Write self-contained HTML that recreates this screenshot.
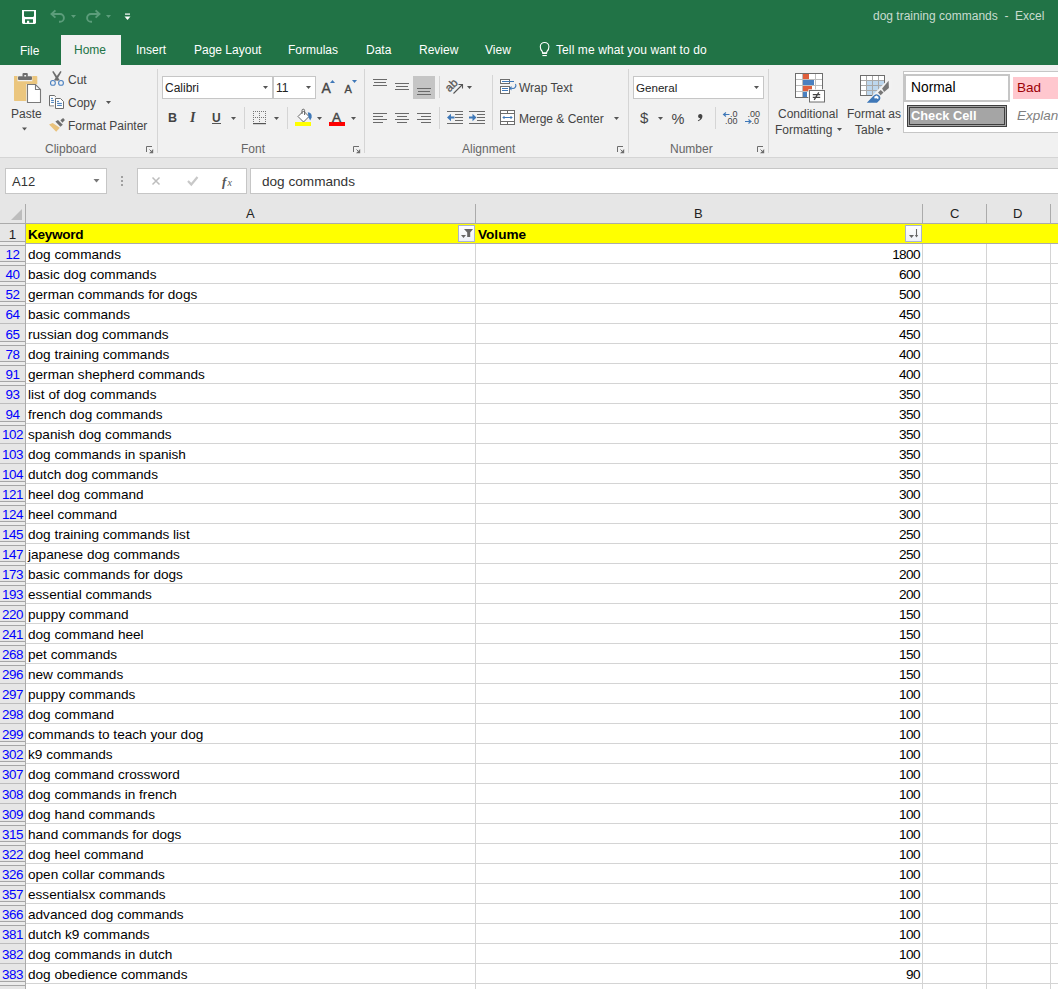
<!DOCTYPE html>
<html><head><meta charset="utf-8"><style>
*{margin:0;padding:0;box-sizing:border-box}
html,body{width:1058px;height:989px;overflow:hidden;background:#fff;font-family:"Liberation Sans",sans-serif;position:relative}
.abs{position:absolute}
#title{position:absolute;left:0;top:0;width:1058px;height:65px;background:#217346}
#ribbon{position:absolute;left:0;top:65px;width:1058px;height:93px;background:#f1f1f1;border-bottom:1px solid #d5d5d5}
#fbar{position:absolute;left:0;top:158px;width:1058px;height:66px;background:#e6e6e6}
.tab{position:absolute;top:44px;font-size:12px;line-height:12px;color:#fff;white-space:nowrap}
.rt{position:absolute;font-size:12px;line-height:12px;color:#444;white-space:nowrap}
.glabel{position:absolute;top:143px;font-size:12px;line-height:12px;color:#666;white-space:nowrap}
.gsep{position:absolute;top:69px;width:1px;height:83px;background:#d9d9d9}
.sep{position:absolute;width:1px;background:#d0d0d0}
.box{position:absolute;background:#fff;border:1px solid #c6c6c6}
/* grid */
#grid{position:absolute;left:0;top:0}
.rh{position:absolute;left:0;width:25px;height:19px;font-size:13.4px;color:#0000ff;text-align:center;line-height:20px;letter-spacing:-0.5px;padding-top:1px}
.ca{position:absolute;left:28px;height:19px;padding-top:1px;font-size:13.6px;color:#000;line-height:20px;white-space:nowrap}
.cb{position:absolute;left:800px;width:120px;height:19px;padding-top:1px;font-size:13.6px;color:#000;line-height:20px;text-align:right;letter-spacing:-0.6px}
.hl{position:absolute;left:26px;width:1032px;height:1px;background:#d4d4d4}
.dbl{position:absolute;left:0;width:25px;height:5px;border-top:1px solid #a6a6a6;border-bottom:1px solid #a6a6a6;background:#ececec}
.sgl{position:absolute;left:0;width:25px;height:1px;background:#bdbdbd}

</style></head><body>
<div id="title"></div>
<div class="abs" style="left:61px;top:35px;width:60px;height:30px;background:#f1f1f1"></div>
<div class="tab" style="left:20px;top:45px">File</div>
<div class="tab" style="left:74px;color:#217346">Home</div>
<div class="tab" style="left:136px">Insert</div>
<div class="tab" style="left:194px">Page Layout</div>
<div class="tab" style="left:288px">Formulas</div>
<div class="tab" style="left:366px">Data</div>
<div class="tab" style="left:419px">Review</div>
<div class="tab" style="left:485px">View</div>
<div class="tab" style="left:556px;letter-spacing:0.1px">Tell me what you want to do</div>
<div class="abs" style="left:873px;top:10px;font-size:12px;line-height:12px;color:#c8dccf;white-space:pre">dog training commands  -  Excel</div>
<div id="ribbon"></div>
<div id="fbar"></div>
<div class="abs" style="left:0;top:224px;width:25px;height:765px;background:#e6e6e6"></div>

<!-- ribbon texts -->
<div class="rt" style="left:11px;top:108px">Paste</div>
<div class="rt" style="left:68px;top:74px">Cut</div>
<div class="rt" style="left:68px;top:97px">Copy</div>
<div class="rt" style="left:68px;top:120px">Format Painter</div>
<div class="glabel" style="left:45px">Clipboard</div>
<div class="glabel" style="left:241px">Font</div>
<div class="glabel" style="left:462px">Alignment</div>
<div class="glabel" style="left:670px">Number</div>
<div class="box" style="left:162px;top:76px;width:111px;height:23px"></div>
<div class="box" style="left:273px;top:76px;width:43px;height:23px"></div>
<div class="rt" style="left:165px;top:82px;color:#222">Calibri</div>
<div class="rt" style="left:276px;top:82px;color:#222">11</div>
<div class="rt" style="left:519px;top:82px">Wrap Text</div>
<div class="rt" style="left:519px;top:113px">Merge &amp; Center</div>
<div class="box" style="left:633px;top:76px;width:131px;height:23px"></div>
<div class="rt" style="left:636px;top:82px;color:#222;font-size:11.6px">General</div>
<div class="rt" style="left:778px;top:108px">Conditional</div>
<div class="rt" style="left:775px;top:124px">Formatting</div>
<div class="rt" style="left:847px;top:108px">Format as</div>
<div class="rt" style="left:855px;top:124px">Table</div>
<!-- styles gallery -->
<div class="abs" style="left:903px;top:71px;width:160px;height:62px;background:#fff;border:1px solid #c6c6c6"></div>
<div class="abs" style="left:904px;top:74px;width:106px;height:28px;border:2px solid #c6c6c6;background:#fff"></div>
<div class="abs" style="left:1013px;top:77px;width:50px;height:22px;background:#ffc7ce"></div>
<div class="abs" style="left:907px;top:105px;width:100px;height:22px;background:#a5a5a5;border:1px solid #3f3f3f;box-shadow:inset 0 0 0 1px #a5a5a5,inset 0 0 0 2px #3f3f3f"></div>
<div class="rt" style="left:911px;top:82px;color:#000;font-size:13.8px">Normal</div>
<div class="rt" style="left:1017px;top:82px;color:#9c0006;font-size:13.5px">Bad</div>
<div class="rt" style="left:911px;top:110px;color:#fff;font-size:12.8px;font-weight:bold">Check Cell</div>
<div class="rt" style="left:1017px;top:110px;color:#7f7f7f;font-size:13.5px;font-style:italic">Explan</div>

<!-- formula bar -->
<div class="box" style="left:5px;top:168px;width:102px;height:26px"></div>
<div class="box" style="left:137px;top:168px;width:110px;height:26px"></div>
<div class="box" style="left:250px;top:168px;width:820px;height:26px"></div>
<div class="abs" style="left:12px;top:174px;font-size:13px;color:#333">A12</div>
<div class="abs" style="left:262px;top:174px;font-size:13.6px;color:#333">dog commands</div>
<!-- col headers -->
<div class="abs" style="left:0;top:223px;width:1058px;height:1px;background:#ababab"></div>
<div class="abs" style="left:25px;top:204px;width:1px;height:785px;background:#ababab"></div>
<div class="abs" style="left:475px;top:204px;width:1px;height:20px;background:#ababab"></div>
<div class="abs" style="left:922px;top:204px;width:1px;height:20px;background:#ababab"></div>
<div class="abs" style="left:986px;top:204px;width:1px;height:20px;background:#ababab"></div>
<div class="abs" style="left:1050px;top:204px;width:1px;height:20px;background:#ababab"></div>
<div class="abs" style="left:475px;top:224px;width:1px;height:765px;background:#d4d4d4"></div>
<div class="abs" style="left:922px;top:224px;width:1px;height:765px;background:#d4d4d4"></div>
<div class="abs" style="left:986px;top:224px;width:1px;height:765px;background:#d4d4d4"></div>
<div class="abs" style="left:1050px;top:224px;width:1px;height:765px;background:#d4d4d4"></div>
<div class="abs" style="left:246px;top:206px;font-size:13px;color:#222">A</div>
<div class="abs" style="left:694px;top:206px;font-size:13px;color:#222">B</div>
<div class="abs" style="left:950px;top:206px;font-size:13px;color:#222">C</div>
<div class="abs" style="left:1013px;top:206px;font-size:13px;color:#222">D</div>
<!-- row 1 -->
<div class="abs" style="left:26px;top:224px;width:1032px;height:19px;background:#ffff00"></div>
<div class="abs" style="left:0;top:243px;width:1058px;height:1px;background:#ababab"></div>
<div class="abs" style="left:0;top:224px;width:25px;text-align:center;font-size:13.4px;line-height:20px;padding-top:1px;color:#222">1</div>
<div class="abs" style="left:28px;top:224px;font-size:13.6px;line-height:20px;padding-top:1px;font-weight:bold;color:#000;letter-spacing:-0.3px">Keyword</div>
<div class="abs" style="left:478px;top:224px;font-size:13.6px;line-height:20px;padding-top:1px;font-weight:bold;color:#000">Volume</div>
<svg class="abs" style="left:0;top:0" width="1058" height="250" viewBox="0 0 1058 250" shape-rendering="geometricPrecision">
<!-- QAT: save -->
<path d="M22 10 H36 V23 L35 24 H23 L22 23 Z" fill="#fff"/>
<path d="M24 11.2 H34 V16 L33.2 17 H24.8 L24 16 Z" fill="#217346"/>
<path d="M25 19.2 H33 V22.8 H29.2 V20.8 H27 V22.8 H25 Z" fill="#217346"/>
<!-- undo -->
<path d="M55.4 10.4 L51.5 14 L55.4 17.6 M52 14 H60 A3.8 3.8 0 0 1 60 21.8 H59" fill="none" stroke="#5c9d7b" stroke-width="1.9"/>
<path d="M71 15h5l-2.5 3z" fill="#5c9d7b"/>
<!-- redo -->
<path d="M95.6 10.4 L99.5 14 L95.6 17.6 M99 14 H91 A3.8 3.8 0 0 0 91 21.8 H92" fill="none" stroke="#5c9d7b" stroke-width="1.9"/>
<path d="M106 15h5l-2.5 3z" fill="#5c9d7b"/>
<!-- customize -->
<rect x="125" y="13.5" width="5" height="1.2" fill="#fff"/>
<path d="M124.5 16.5h6l-3 3.5z" fill="#fff"/>
<!-- bulb -->
<path d="M542.3 51.5 Q540.2 49.5 540.3 46.8 A4.3 4.3 0 0 1 548.9 46.8 Q549 49.5 546.9 51.5 L546.6 53.3 H542.6 Z" fill="none" stroke="#fff" stroke-width="1.1"/>
<rect x="542.4" y="52.3" width="4.4" height="1.6" fill="#fff"/>
<rect x="542.4" y="55" width="4.4" height="1.1" fill="#fff"/>
<!-- Paste clipboard -->
<path d="M14 76 h3.5 v5.3 h14.8 v-5.3 h4.2 a0.8 0.8 0 0 1 0.8 0.8 v7.2 h-11 v17 h-11.5 a0.8 0.8 0 0 1 -0.8 -0.8 z" fill="#ebc67e"/>
<rect x="18" y="76.3" width="14" height="3.6" rx="1" fill="#6d6d6d"/>
<rect x="22.5" y="73" width="5.3" height="4" rx="1" fill="#6d6d6d"/>
<rect x="24.3" y="75" width="1.8" height="1.5" fill="#f1f1f1"/>
<path d="M27.5 84.5 h8 l5 5 v13 h-13 z" fill="#fff" stroke="#7a7a7a" stroke-width="1.1"/>
<path d="M35.5 84.5 v5 h5" fill="none" stroke="#7a7a7a" stroke-width="1.1"/>
<!-- paste arrow -->
<path d="M22 127.5h5l-2.5 3z" fill="#555"/>
<!-- scissors -->
<path d="M52.2 71.8 L53.4 70.9 L59.7 80.1 L57.5 81.1 Z" fill="#6d6d6d"/><path d="M61.6 71.8 L60.4 70.9 L54.1 80.1 L56.3 81.1 Z" fill="#6d6d6d"/>
<circle cx="52.9" cy="82.9" r="2.4" fill="none" stroke="#4a80c0" stroke-width="1.1"/>
<circle cx="61" cy="82.9" r="2.4" fill="none" stroke="#4a80c0" stroke-width="1.1"/>
<!-- copy -->
<path d="M49.5 95.5 h5 l1.2 1.5 M49.5 95.5 v10.3 h4.5" fill="none" stroke="#6d6d6d" stroke-width="1"/>
<rect x="50" y="96" width="4.5" height="9.3" fill="#fff"/>
<rect x="51.1" y="97.9" width="1.8" height="1" fill="#3f78b8"/>
<rect x="51.1" y="99.9" width="2.8" height="1" fill="#3f78b8"/>
<rect x="51.1" y="101.9" width="2.8" height="1" fill="#3f78b8"/>
<path d="M55.5 98.5 h5 l3 3 v7 h-8 z" fill="#fff" stroke="#6d6d6d" stroke-width="1"/>
<rect x="57.1" y="100.9" width="1.8" height="1" fill="#3f78b8"/>
<rect x="57.1" y="102.9" width="4.8" height="1" fill="#3f78b8"/>
<rect x="57.1" y="104.9" width="4.8" height="1" fill="#3f78b8"/>
<path d="M106 101h5l-2.5 3z" fill="#555"/>
<!-- format painter -->
<path d="M49.1 124.4 L52.7 123.1 L59.8 127.8 L56.2 131.8 Z" fill="#e9c27c"/>
<path d="M55.4 121.6 L58 120 L62.8 124.8 L60.4 126.7 Z" fill="#6d6d6d"/>
<path d="M60.4 120.2 L63.1 118 L64.9 120 L62.4 122.7 Z" fill="#6d6d6d"/>
<!-- dialog launchers -->
<path d="M146.5 152 V146.5 H152" fill="none" stroke="#6d6d6d" stroke-width="1"/><path d="M153.2 149 V153.2 H149 Z" fill="#6d6d6d"/><path d="M149.5 149.5 L151 151" stroke="#6d6d6d" stroke-width="1"/>
<path d="M353.5 152 V146.5 H359" fill="none" stroke="#6d6d6d" stroke-width="1"/><path d="M360.2 149 V153.2 H356 Z" fill="#6d6d6d"/><path d="M356.5 149.5 L358 151" stroke="#6d6d6d" stroke-width="1"/>
<path d="M617.5 152 V146.5 H623" fill="none" stroke="#6d6d6d" stroke-width="1"/><path d="M624.2 149 V153.2 H620 Z" fill="#6d6d6d"/><path d="M620.5 149.5 L622 151" stroke="#6d6d6d" stroke-width="1"/>
<path d="M757.5 152 V146.5 H763" fill="none" stroke="#6d6d6d" stroke-width="1"/><path d="M764.2 149 V153.2 H760 Z" fill="#6d6d6d"/><path d="M760.5 149.5 L762 151" stroke="#6d6d6d" stroke-width="1"/>
<!-- group separators -->
<g fill="#d5d5d5">
<rect x="157" y="69" width="1" height="84"/>
<rect x="364" y="69" width="1" height="84"/>
<rect x="628" y="69" width="1" height="84"/>
<rect x="768" y="69" width="1" height="84"/>
<rect x="244" y="107" width="1" height="22"/>
<rect x="287" y="107" width="1" height="22"/>
<rect x="439" y="76" width="1" height="22"/>
<rect x="439" y="107" width="1" height="22"/>
<rect x="492" y="75" width="1" height="55"/>
<rect x="715" y="107" width="1" height="22"/>
</g>
<!-- font combos arrows -->
<g fill="#555">
<path d="M263 86h5l-2.5 3z"/>
<path d="M306 86h5l-2.5 3z"/>
<path d="M754 86h5l-2.5 3z"/>
<path d="M231 117h5l-2.5 3z"/>
<path d="M274 117h5l-2.5 3z"/>
<path d="M317 117h5l-2.5 3z"/>
<path d="M351 117h5l-2.5 3z"/>
<path d="M467 86h5l-2.5 3z"/>
<path d="M614 117h5l-2.5 3z"/>
<path d="M658 117h5l-2.5 3z"/>
<path d="M837 128h5l-2.5 3z"/>
<path d="M886 128h5l-2.5 3z"/>
</g>
<!-- grow/shrink -->
<path d="M330 83 h5 l-2.5 -3z" fill="#3f78b8"/>
<path d="M352 80 h5 l-2.5 3z" fill="#3f78b8"/>
<!-- underline bar -->
<rect x="212" y="123" width="9" height="1" fill="#555"/>
<!-- borders icon -->
<g fill="#777">
<path d="M253 111h1v1h-1zM255 111h1v1h-1zM257 111h1v1h-1zM259 111h1v1h-1zM261 111h1v1h-1zM263 111h1v1h-1zM265 111h1v1h-1z"/>
<path d="M253 113h1v1h-1zM253 115h1v1h-1zM253 117h1v1h-1zM253 119h1v1h-1zM253 121h1v1h-1z"/>
<path d="M265 113h1v1h-1zM265 115h1v1h-1zM265 117h1v1h-1zM265 119h1v1h-1zM265 121h1v1h-1z"/>
<path d="M259 113h1v1h-1zM259 115h1v1h-1zM259 119h1v1h-1zM259 121h1v1h-1z"/>
<path d="M255 117h1v1h-1zM257 117h1v1h-1zM261 117h1v1h-1zM263 117h1v1h-1zM259 117h1v1h-1z"/>
</g>
<rect x="253" y="123" width="13" height="1.2" fill="#555"/>
<!-- fill bucket -->
<path d="M298 116.5 L303.5 111 L309 116.5 L303.5 122 Z" fill="#fff" stroke="#666" stroke-width="1"/>
<path d="M302 114 V110.5 A1.3 1.3 0 0 1 304.6 110.5 V115" fill="none" stroke="#666" stroke-width="1"/>
<path d="M307.8 112.3 Q312.3 112.8 311.6 117.5 L310.2 120.5 L308.6 117.2 Z" fill="#3f78b8"/>
<rect x="295" y="122" width="16" height="4" fill="#ffff00"/>
<!-- font color -->
<rect x="329" y="122" width="16" height="4" fill="#ff0000"/>
<!-- alignment lines -->
<g fill="#6a6a6a">
<rect x="373" y="79" width="14" height="1"/><rect x="374" y="82" width="12" height="1"/><rect x="373" y="85" width="14" height="1"/>
<rect x="395" y="83" width="14" height="1"/><rect x="396" y="86" width="12" height="1"/><rect x="395" y="89" width="14" height="1"/>
</g>
<rect x="413" y="76" width="22" height="23" fill="#c5c5c5"/>
<g fill="#6a6a6a">
<rect x="417" y="88" width="14" height="1"/><rect x="418" y="91" width="12" height="1"/><rect x="417" y="94" width="14" height="1"/>
<rect x="373" y="113" width="14" height="1"/><rect x="373" y="116" width="10" height="1"/><rect x="373" y="119" width="14" height="1"/><rect x="373" y="122" width="10" height="1"/>
<rect x="395" y="113" width="14" height="1"/><rect x="397" y="116" width="10" height="1"/><rect x="395" y="119" width="14" height="1"/><rect x="397" y="122" width="10" height="1"/>
<rect x="417" y="113" width="14" height="1"/><rect x="421" y="116" width="10" height="1"/><rect x="417" y="119" width="14" height="1"/><rect x="421" y="122" width="10" height="1"/>
<!-- indent -->
<rect x="447" y="111" width="16" height="1"/><rect x="455" y="114" width="8" height="1"/><rect x="455" y="117" width="8" height="1"/><rect x="455" y="120" width="8" height="1"/><rect x="447" y="123" width="16" height="1"/>
<rect x="469" y="111" width="16" height="1"/><rect x="477" y="114" width="8" height="1"/><rect x="477" y="117" width="8" height="1"/><rect x="477" y="120" width="8" height="1"/><rect x="469" y="123" width="16" height="1"/>
</g>
<path d="M447 117.5 L451 113.8 V116.4 H454.5 V118.6 H451 V121.2 Z" fill="#3f78b8"/>
<path d="M476.5 117.5 L472.5 113.8 V116.4 H469 V118.6 H472.5 V121.2 Z" fill="#3f78b8"/>
<!-- orientation -->
<text x="0" y="0" transform="translate(449.5 92.5) rotate(-45)" font-family="Liberation Sans" font-size="11.5" fill="#555" stroke="#555" stroke-width="0.3">ab</text>
<path d="M453.5 93.5 L462.5 84.5 M458.5 84.5 H462.5 V88.5" fill="none" stroke="#555" stroke-width="1.1"/>
<!-- wrap text icon -->
<rect x="500.5" y="79.5" width="9" height="4" fill="#fff" stroke="#6d6d6d" stroke-width="1"/>
<rect x="500.5" y="86.5" width="9" height="7" fill="#fff" stroke="#6d6d6d" stroke-width="1"/>
<rect x="502" y="81" width="12" height="1" fill="#3f78b8"/>
<rect x="502" y="88" width="6" height="1" fill="#3f78b8"/>
<rect x="502" y="90" width="6" height="1" fill="#3f78b8"/>
<path d="M515.5 84 A3 3 0 0 1 512 88.3 H510" fill="none" stroke="#3f78b8" stroke-width="1.1"/>
<path d="M509 88.3 L511.5 86 V90.5 Z" fill="#3f78b8"/>
<!-- merge icon -->
<rect x="500.5" y="110.5" width="14" height="14" fill="#fff" stroke="#6d6d6d" stroke-width="1"/>
<rect x="501" y="113" width="13" height="1" fill="#6d6d6d"/>
<rect x="501" y="121" width="13" height="1" fill="#6d6d6d"/>
<rect x="507" y="111" width="1" height="2" fill="#6d6d6d"/>
<rect x="507" y="122" width="1" height="2" fill="#6d6d6d"/>
<path d="M503 117.5 H512 M504.5 116 L503 117.5 L504.5 119 M510.5 116 L512 117.5 L510.5 119" fill="none" stroke="#3f78b8" stroke-width="1"/>
<!-- decimals -->
<path d="M723.5 114.5 H729.5 M726 112.5 L723.5 114.5 L726 116.5" fill="none" stroke="#3f78b8" stroke-width="1.1"/>
<path d="M745 121.5 H751 M748.5 119.5 L751 121.5 L748.5 123.5" fill="none" stroke="#3f78b8" stroke-width="1.1"/>
<!-- conditional formatting -->
<rect x="795.5" y="73.5" width="27" height="24" fill="#fff" stroke="#6d6d6d" stroke-width="1"/>
<g fill="#bdbdbd">
<rect x="802" y="74" width="1" height="23"/><rect x="815" y="74" width="1" height="23"/>
<rect x="796" y="79" width="26" height="1"/><rect x="796" y="85" width="26" height="1"/><rect x="796" y="91" width="26" height="1"/>
</g>
<rect x="803" y="74" width="6" height="5" fill="#df5f3c"/>
<rect x="803" y="80" width="11" height="5" fill="#4a80c0"/>
<rect x="803" y="86" width="9" height="5" fill="#df5f3c"/>
<rect x="803" y="92" width="4" height="5" fill="#4a80c0"/>
<rect x="808.3" y="89.3" width="17.5" height="14" fill="#f1f1f1"/>
<rect x="809.5" y="90.5" width="15" height="11.5" fill="#fff" stroke="#6d6d6d" stroke-width="1"/>
<path d="M812.8 94.5 H820.2 M812.8 97.4 H820.2 M818.8 92.3 L814.2 99.8" fill="none" stroke="#444" stroke-width="1.25"/>
<!-- format as table -->
<rect x="860.5" y="75.5" width="24" height="20" fill="#fff" stroke="#6d6d6d" stroke-width="1"/>
<rect x="867" y="81" width="17" height="14" fill="#bdd7ee"/>
<g fill="#a8a8a8">
<rect x="866" y="76" width="1" height="19"/><rect x="872" y="76" width="1" height="19"/><rect x="878" y="76" width="1" height="19"/>
<rect x="861" y="80" width="23" height="1"/><rect x="861" y="85" width="23" height="1"/><rect x="861" y="90" width="23" height="1"/>
</g>
<path d="M864 104 L888 79.5 L892 79 L892 90 L878 104 Z" fill="#f2f2f2"/>
<path d="M888.6 80.7 L888.9 87.9 L884.1 91.9 L882.1 88.5 Z" fill="#777"/>
<path d="M880.7 89.9 L883.5 92.4 L880.7 95.2 L878 92.5 Z" fill="#777"/>
<path d="M866.8 102.8 L873.5 95.8 A3.8 3.8 0 0 1 879.8 100 L877 102.8 Z" fill="#3f78b8"/>
<path d="M874.3 96.8 L876.6 95.6 L878.6 97 L878.2 99.3 L876.5 98.2 L874.5 98.5 Z" fill="#fff"/>
<!-- glyphs -->
<path d="M700 114 A2.1 2.1 0 0 1 702.4 116.6 Q702.2 119.6 698.2 121.3 L697.8 120.6 Q700 119.4 700.3 118.2 A2.1 2.1 0 0 1 700 114 Z" fill="#444"/>
<g font-family="Liberation Sans" fill="#444">
<text x="168" y="122" font-size="12.5" font-weight="bold">B</text>
<text x="190" y="122" font-size="14" font-style="italic" font-weight="bold" font-family="Liberation Serif">I</text>
<text x="212" y="121.5" font-size="12" font-weight="bold">U</text>
<text x="321.5" y="93" font-size="14" stroke="#444" stroke-width="0.35">A</text>
<text x="344.5" y="93" font-size="11" stroke="#444" stroke-width="0.35">A</text>
<text x="332" y="122" font-size="13.5" stroke="#444" stroke-width="0.45">A</text>
<text x="640" y="122.5" font-size="15">$</text>
<text x="671.5" y="123.5" font-size="14.5">%</text>

<text x="730" y="117" font-size="9">.0</text>
<text x="725" y="123.6" font-size="9">.00</text>
<text x="747.5" y="117" font-size="9">.00</text>
<text x="751.5" y="123.6" font-size="9">.0</text>
</g>
<!-- formula bar icons -->
<path d="M93.5 179h6l-3 3.5z" fill="#777"/>
<g fill="#a0a0a0"><rect x="121" y="176" width="2" height="2"/><rect x="121" y="180" width="2" height="2"/><rect x="121" y="184" width="2" height="2"/></g>
<path d="M152.5 177.5 L159.5 184.5 M159.5 177.5 L152.5 184.5" stroke="#bdbdbd" stroke-width="1.5"/>
<path d="M188 181 L191.3 184.5 L197.5 177" fill="none" stroke="#c8c8c8" stroke-width="2.2"/>
<text x="222" y="185.5" font-family="Liberation Serif" font-style="italic" font-weight="bold" font-size="13" fill="#555">f</text>
<text x="227.5" y="185.5" font-family="Liberation Serif" font-style="italic" font-size="10" fill="#555">x</text>
<path d="M11 220 L22 209 V220 Z" fill="#bdbdbd"/>
</g>

<!-- filter buttons -->
<defs><linearGradient id="fg" x1="0" y1="0" x2="0" y2="1"><stop offset="0" stop-color="#ffffff"/><stop offset="1" stop-color="#eef1f7"/></linearGradient></defs>
<rect x="458.5" y="225.5" width="16" height="16" fill="url(#fg)" stroke="#a9b3cf" stroke-width="1"/>
<path d="M464 229 H473 L470.2 232.5 V237 H467.2 V232.5 Z" fill="#666"/>
<path d="M461 235 H466 L463.5 238 Z" fill="#666"/>
<rect x="905.5" y="225.5" width="16" height="16" fill="url(#fg)" stroke="#a9b3cf" stroke-width="1"/>
<path d="M909 235 H914 L911.5 238 Z" fill="#666"/>
<path d="M916.5 229 V237" stroke="#666" stroke-width="1.1"/>
<path d="M914.8 235 H918.2 L916.5 237.5 Z" fill="#666"/>
</svg>

<div id="grid">
<div class="rh" style="top:244px">12</div><div class="ca" style="top:244px">dog commands</div><div class="cb" style="top:244px">1800</div><div class="hl" style="top:263px"></div><div class="dbl" style="top:241px"></div><div class="rh" style="top:264px">40</div><div class="ca" style="top:264px">basic dog commands</div><div class="cb" style="top:264px">600</div><div class="hl" style="top:283px"></div><div class="dbl" style="top:261px"></div><div class="rh" style="top:284px">52</div><div class="ca" style="top:284px">german commands for dogs</div><div class="cb" style="top:284px">500</div><div class="hl" style="top:303px"></div><div class="dbl" style="top:281px"></div><div class="rh" style="top:304px">64</div><div class="ca" style="top:304px">basic commands</div><div class="cb" style="top:304px">450</div><div class="hl" style="top:323px"></div><div class="dbl" style="top:301px"></div><div class="rh" style="top:324px">65</div><div class="ca" style="top:324px">russian dog commands</div><div class="cb" style="top:324px">450</div><div class="hl" style="top:343px"></div><div class="sgl" style="top:323px"></div><div class="rh" style="top:344px">78</div><div class="ca" style="top:344px">dog training commands</div><div class="cb" style="top:344px">400</div><div class="hl" style="top:363px"></div><div class="dbl" style="top:341px"></div><div class="rh" style="top:364px">91</div><div class="ca" style="top:364px">german shepherd commands</div><div class="cb" style="top:364px">400</div><div class="hl" style="top:383px"></div><div class="dbl" style="top:361px"></div><div class="rh" style="top:384px">93</div><div class="ca" style="top:384px">list of dog commands</div><div class="cb" style="top:384px">350</div><div class="hl" style="top:403px"></div><div class="dbl" style="top:381px"></div><div class="rh" style="top:404px">94</div><div class="ca" style="top:404px">french dog commands</div><div class="cb" style="top:404px">350</div><div class="hl" style="top:423px"></div><div class="sgl" style="top:403px"></div><div class="rh" style="top:424px">102</div><div class="ca" style="top:424px">spanish dog commands</div><div class="cb" style="top:424px">350</div><div class="hl" style="top:443px"></div><div class="dbl" style="top:421px"></div><div class="rh" style="top:444px">103</div><div class="ca" style="top:444px">dog commands in spanish</div><div class="cb" style="top:444px">350</div><div class="hl" style="top:463px"></div><div class="sgl" style="top:443px"></div><div class="rh" style="top:464px">104</div><div class="ca" style="top:464px">dutch dog commands</div><div class="cb" style="top:464px">350</div><div class="hl" style="top:483px"></div><div class="sgl" style="top:463px"></div><div class="rh" style="top:484px">121</div><div class="ca" style="top:484px">heel dog command</div><div class="cb" style="top:484px">300</div><div class="hl" style="top:503px"></div><div class="dbl" style="top:481px"></div><div class="rh" style="top:504px">124</div><div class="ca" style="top:504px">heel command</div><div class="cb" style="top:504px">300</div><div class="hl" style="top:523px"></div><div class="dbl" style="top:501px"></div><div class="rh" style="top:524px">145</div><div class="ca" style="top:524px">dog training commands list</div><div class="cb" style="top:524px">250</div><div class="hl" style="top:543px"></div><div class="dbl" style="top:521px"></div><div class="rh" style="top:544px">147</div><div class="ca" style="top:544px">japanese dog commands</div><div class="cb" style="top:544px">250</div><div class="hl" style="top:563px"></div><div class="dbl" style="top:541px"></div><div class="rh" style="top:564px">173</div><div class="ca" style="top:564px">basic commands for dogs</div><div class="cb" style="top:564px">200</div><div class="hl" style="top:583px"></div><div class="dbl" style="top:561px"></div><div class="rh" style="top:584px">193</div><div class="ca" style="top:584px">essential commands</div><div class="cb" style="top:584px">200</div><div class="hl" style="top:603px"></div><div class="dbl" style="top:581px"></div><div class="rh" style="top:604px">220</div><div class="ca" style="top:604px">puppy command</div><div class="cb" style="top:604px">150</div><div class="hl" style="top:623px"></div><div class="dbl" style="top:601px"></div><div class="rh" style="top:624px">241</div><div class="ca" style="top:624px">dog command heel</div><div class="cb" style="top:624px">150</div><div class="hl" style="top:643px"></div><div class="dbl" style="top:621px"></div><div class="rh" style="top:644px">268</div><div class="ca" style="top:644px">pet commands</div><div class="cb" style="top:644px">150</div><div class="hl" style="top:663px"></div><div class="dbl" style="top:641px"></div><div class="rh" style="top:664px">296</div><div class="ca" style="top:664px">new commands</div><div class="cb" style="top:664px">150</div><div class="hl" style="top:683px"></div><div class="dbl" style="top:661px"></div><div class="rh" style="top:684px">297</div><div class="ca" style="top:684px">puppy commands</div><div class="cb" style="top:684px">100</div><div class="hl" style="top:703px"></div><div class="sgl" style="top:683px"></div><div class="rh" style="top:704px">298</div><div class="ca" style="top:704px">dog command</div><div class="cb" style="top:704px">100</div><div class="hl" style="top:723px"></div><div class="sgl" style="top:703px"></div><div class="rh" style="top:724px">299</div><div class="ca" style="top:724px">commands to teach your dog</div><div class="cb" style="top:724px">100</div><div class="hl" style="top:743px"></div><div class="sgl" style="top:723px"></div><div class="rh" style="top:744px">302</div><div class="ca" style="top:744px">k9 commands</div><div class="cb" style="top:744px">100</div><div class="hl" style="top:763px"></div><div class="dbl" style="top:741px"></div><div class="rh" style="top:764px">307</div><div class="ca" style="top:764px">dog command crossword</div><div class="cb" style="top:764px">100</div><div class="hl" style="top:783px"></div><div class="dbl" style="top:761px"></div><div class="rh" style="top:784px">308</div><div class="ca" style="top:784px">dog commands in french</div><div class="cb" style="top:784px">100</div><div class="hl" style="top:803px"></div><div class="sgl" style="top:783px"></div><div class="rh" style="top:804px">309</div><div class="ca" style="top:804px">dog hand commands</div><div class="cb" style="top:804px">100</div><div class="hl" style="top:823px"></div><div class="sgl" style="top:803px"></div><div class="rh" style="top:824px">315</div><div class="ca" style="top:824px">hand commands for dogs</div><div class="cb" style="top:824px">100</div><div class="hl" style="top:843px"></div><div class="dbl" style="top:821px"></div><div class="rh" style="top:844px">322</div><div class="ca" style="top:844px">dog heel command</div><div class="cb" style="top:844px">100</div><div class="hl" style="top:863px"></div><div class="dbl" style="top:841px"></div><div class="rh" style="top:864px">326</div><div class="ca" style="top:864px">open collar commands</div><div class="cb" style="top:864px">100</div><div class="hl" style="top:883px"></div><div class="dbl" style="top:861px"></div><div class="rh" style="top:884px">357</div><div class="ca" style="top:884px">essentialsx commands</div><div class="cb" style="top:884px">100</div><div class="hl" style="top:903px"></div><div class="dbl" style="top:881px"></div><div class="rh" style="top:904px">366</div><div class="ca" style="top:904px">advanced dog commands</div><div class="cb" style="top:904px">100</div><div class="hl" style="top:923px"></div><div class="dbl" style="top:901px"></div><div class="rh" style="top:924px">381</div><div class="ca" style="top:924px">dutch k9 commands</div><div class="cb" style="top:924px">100</div><div class="hl" style="top:943px"></div><div class="dbl" style="top:921px"></div><div class="rh" style="top:944px">382</div><div class="ca" style="top:944px">dog commands in dutch</div><div class="cb" style="top:944px">100</div><div class="hl" style="top:963px"></div><div class="sgl" style="top:943px"></div><div class="rh" style="top:964px">383</div><div class="ca" style="top:964px">dog obedience commands</div><div class="cb" style="top:964px">90</div><div class="hl" style="top:983px"></div><div class="sgl" style="top:963px"></div><div class="dbl" style="top:981px"></div>
</div>
</body></html>
